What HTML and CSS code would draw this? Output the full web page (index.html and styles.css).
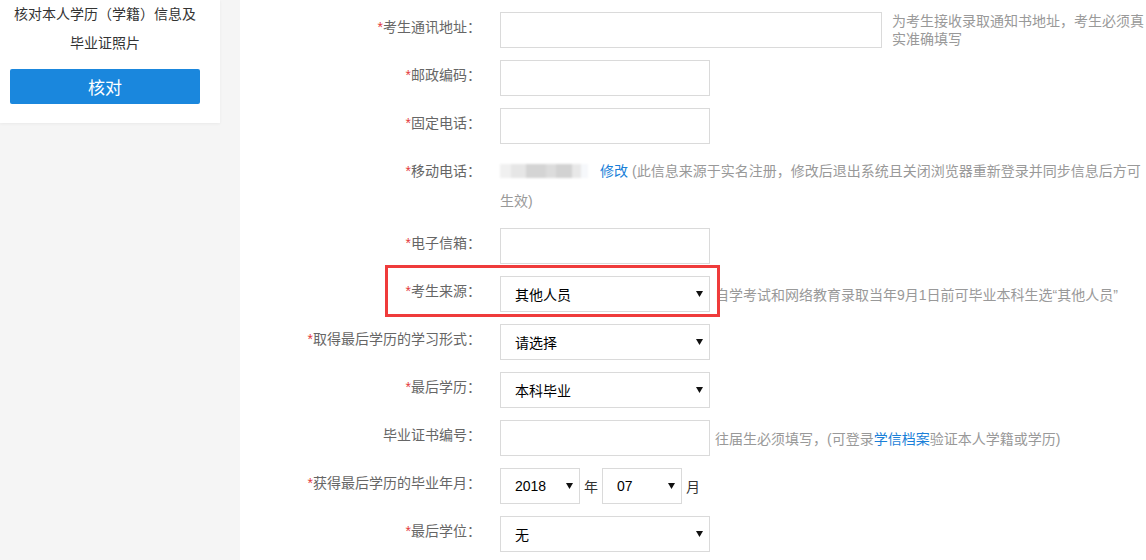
FILE: index.html
```html
<!DOCTYPE html>
<html lang="zh-CN">
<head>
<meta charset="utf-8">
<title>考生信息</title>
<link rel="stylesheet" href="styles.css">
</head>
<body>
<div class="page">
  <aside class="side">
    <div class="card">
      <p class="card-text">核对本人学历（学籍）信息及<br>毕业证照片</p>
      <button class="btn">核对</button>
    </div>
  </aside>
  <main class="main">
    <div class="form">
      <div class="row">
        <div class="label"><span class="req">*</span>考生通讯地址：</div>
        <div class="value">
          <div class="input input-wide"></div>
          <div class="hint hint-block">为考生接收录取通知书地址，考生必须真实准确填写</div>
        </div>
      </div>
      <div class="row">
        <div class="label"><span class="req">*</span>邮政编码：</div>
        <div class="value"><div class="input"></div></div>
      </div>
      <div class="row">
        <div class="label"><span class="req">*</span>固定电话：</div>
        <div class="value"><div class="input"></div></div>
      </div>
      <div class="row">
        <div class="label"><span class="req">*</span>移动电话：</div>
        <div class="value value-text"><div class="mobile-text"><span class="blur"></span><a class="link link-edit">修改</a><span class="note">(此信息来源于实名注册，修改后退出系统且关闭浏览器重新登录并同步信息后方可</span><span class="note-end">生效)</span></div></div>
      </div>
      <div class="row">
        <div class="label"><span class="req">*</span>电子信箱：</div>
        <div class="value"><div class="input"></div></div>
      </div>
      <div class="row row-marked">
        <div class="label"><span class="req">*</span>考生来源：</div>
        <div class="value">
          <div class="select"><span>其他人员</span><svg class="arrow" width="7" height="6" viewBox="0 0 7 6"><path d="M0 0H7L3.5 6Z"/></svg></div>
          <div class="hint">自学考试和网络教育录取当年9月1日前可毕业本科生选“其他人员”</div>
        </div>
        <div class="mark"></div>
      </div>
      <div class="row">
        <div class="label"><span class="req">*</span>取得最后学历的学习形式：</div>
        <div class="value">
          <div class="select"><span>请选择</span><svg class="arrow" width="7" height="6" viewBox="0 0 7 6"><path d="M0 0H7L3.5 6Z"/></svg></div>
        </div>
      </div>
      <div class="row">
        <div class="label"><span class="req">*</span>最后学历：</div>
        <div class="value">
          <div class="select"><span>本科毕业</span><svg class="arrow" width="7" height="6" viewBox="0 0 7 6"><path d="M0 0H7L3.5 6Z"/></svg></div>
        </div>
      </div>
      <div class="row">
        <div class="label">毕业证书编号：</div>
        <div class="value">
          <div class="input"></div>
          <div class="hint"><span>往届生必须填写，(可登录</span><a class="link">学信档案</a><span>验证本人学籍或学历)</span></div>
        </div>
      </div>
      <div class="row">
        <div class="label"><span class="req">*</span>获得最后学历的毕业年月：</div>
        <div class="value">
          <div class="select select-small"><span>2018</span><svg class="arrow" width="7" height="6" viewBox="0 0 7 6"><path d="M0 0H7L3.5 6Z"/></svg></div>
          <span class="unit">年</span>
          <div class="select select-small"><span>07</span><svg class="arrow" width="7" height="6" viewBox="0 0 7 6"><path d="M0 0H7L3.5 6Z"/></svg></div>
          <span class="unit">月</span>
        </div>
      </div>
      <div class="row">
        <div class="label"><span class="req">*</span>最后学位：</div>
        <div class="value">
          <div class="select"><span>无</span><svg class="arrow" width="7" height="6" viewBox="0 0 7 6"><path d="M0 0H7L3.5 6Z"/></svg></div>
        </div>
      </div>
    </div>
  </main>
</div>
</body>
</html>
```

FILE: styles.css
```css
* { box-sizing: border-box; }
html, body {
  margin: 0;
  padding: 0;
  height: 100%;
}
body {
  font-family: "Liberation Sans", "Noto Sans CJK SC", sans-serif;
  font-size: 14px;
  color: #333;
  background: #fff;
  overflow: hidden;
}
.page {
  display: flex;
  min-height: 560px;
}
.side {
  width: 240px;
  flex: none;
  background: #f5f5f5;
}
.card {
  width: 220px;
  background: #fff;
  padding: 0 20px 19px 10px;
  box-shadow: 0 1px 3px rgba(0, 0, 0, 0.05);
  display: flex;
  flex-direction: column;
}
.card-text {
  margin: 0;
  line-height: 29px;
  text-align: center;
  color: #333;
  white-space: nowrap;
}
.btn {
  margin-top: 11px;
  height: 35px;
  width: 190px;
  border: 0;
  border-radius: 2px;
  background: #1a87dd;
  color: #fff;
  font-family: inherit;
  font-size: 17px;
  padding: 0;
}
.main {
  flex: 1;
  background: #fff;
}
.form {
  padding-top: 12px;
  display: flex;
  flex-direction: column;
  gap: 12px;
}
.row {
  display: grid;
  grid-template-columns: 241px 1fr;
  column-gap: 19px;
  position: relative;
}
.label {
  text-align: right;
  line-height: 30px;
  color: #666;
  white-space: nowrap;
}
.req {
  color: #e4393c;
}
.value {
  display: flex;
  align-items: center;
  min-height: 36px;
}
.input {
  width: 210px;
  height: 36px;
  border: 1px solid #dadada;
  background: #fff;
  flex: none;
}
.input-wide {
  width: 382px;
}
.hint {
  color: #999;
  margin-left: 5px;
  white-space: nowrap;
}
.hint-block {
  align-self: flex-start;
  white-space: normal;
  width: 256px;
  margin-left: 10px;
  line-height: 18px;
}
.link {
  color: #1a7fd8;
  text-decoration: none;
}
.value-text {
  align-items: flex-start;
}
.mobile-text {
  width: 648px;
  line-height: 30px;
  color: #999;
}
.blur {
  display: inline-block;
  width: 88px;
  height: 14px;
  vertical-align: -2px;
  background: linear-gradient(90deg, #f0f0f0 0 12%, #e6e6e6 12% 30%, #d4d4d4 30% 52%, #dcdcdc 52% 64%, #d2d2d2 64% 82%, #e8e8e8 82% 92%, #f6f8fb 92%);
  filter: blur(0.8px);
}
.link-edit {
  margin-left: 12px;
  margin-right: 4px;
}
.select {
  width: 210px;
  height: 36px;
  border: 1px solid #dadada;
  background: #fff;
  display: flex;
  align-items: center;
  padding: 0 6px 0 14px;
  color: #000;
  flex: none;
}
.select span {
  flex: 1;
}
.select-small {
  width: 80px;
}
.arrow {
  fill: #111;
  flex: none;
}
.unit {
  color: #333;
  margin: 0 4px;
}
.mark {
  position: absolute;
  left: 145px;
  top: -11px;
  width: 335px;
  height: 52px;
  border: 3px solid #ef3b3b;
  pointer-events: none;
}
```
